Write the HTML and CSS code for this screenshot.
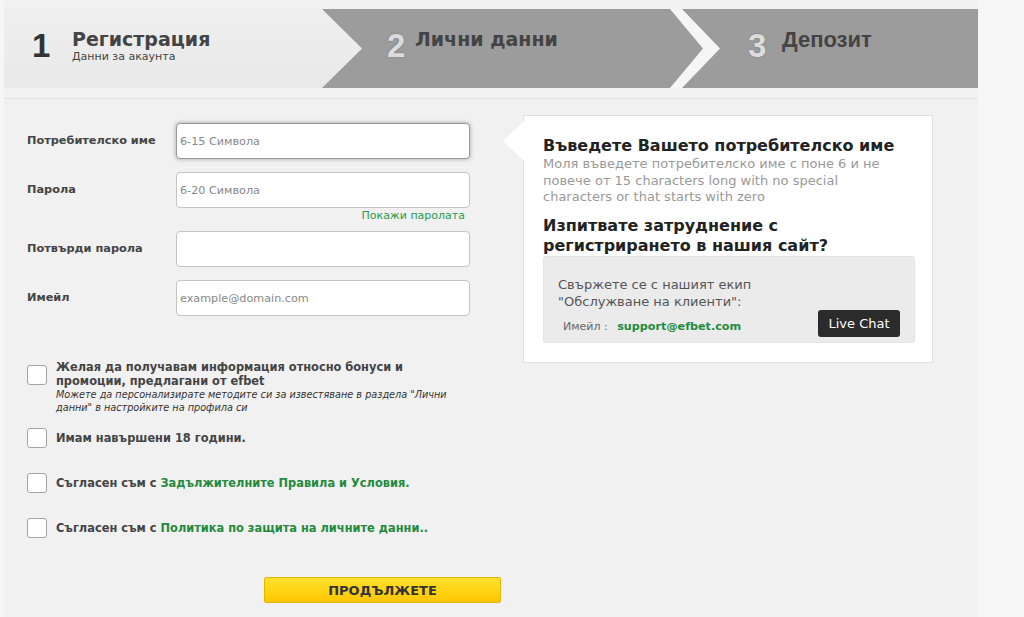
FILE: index.html
```html
<!DOCTYPE html>
<html lang="bg">
<head>
  <meta charset="UTF-8">
  <meta name="viewport" content="width=device-width, initial-scale=1.0">
  <title>Регистрация</title>
  <link rel="stylesheet" href="styles.css">
</head>
<body>
  <div class="page">
    <div class="steps">
      <div class="step step-active">
        <span class="step-num">1</span>
        <div class="step-text">
          <div class="step-title">Регистрация</div>
          <div class="step-sub">Данни за акаунта</div>
        </div>
      </div>
      <div class="step step-next">
        <span class="step-num">2</span>
        <div class="step-title">Лични данни</div>
      </div>
      <div class="step-sep"></div>
      <div class="step step-last">
        <span class="step-num">3</span>
        <div class="step-title">Депозит</div>
      </div>
    </div>
    <div class="divider"></div>

    <div class="content">
      <form class="reg-form" onsubmit="return false">
        <div class="field">
          <label for="username">Потребителско име</label>
          <input type="text" id="username" class="is-focused" placeholder="6-15 Символа">
        </div>
        <div class="field field-pass">
          <label for="password">Парола</label>
          <div class="field-col">
            <input type="password" id="password" placeholder="6-20 Символа">
            <a href="#" class="show-pass">Покажи паролата</a>
          </div>
        </div>
        <div class="field">
          <label for="confirm">Потвърди парола</label>
          <input type="password" id="confirm">
        </div>
        <div class="field">
          <label for="email">Имейл</label>
          <input type="email" id="email" placeholder="example@domain.com">
        </div>

        <div class="checks">
          <div class="check check-promo">
            <input type="checkbox" id="promo">
            <div class="check-text">
              <label for="promo">Желая да получавам информация относно бонуси и промоции, предлагани от efbet</label>
              <p class="check-note">Можете да персонализирате методите си за известяване в раздела "Лични данни" в настройките на профила си</p>
            </div>
          </div>
          <div class="check">
            <input type="checkbox" id="age">
            <label for="age">Имам навършени 18 години.</label>
          </div>
          <div class="check">
            <input type="checkbox" id="terms">
            <label for="terms">Съгласен съм с <a href="#">Задължителните Правила и Условия.</a></label>
          </div>
          <div class="check">
            <input type="checkbox" id="privacy">
            <label for="privacy">Съгласен съм с <a href="#">Политика по защита на личните данни..</a></label>
          </div>
        </div>

        <button type="submit" class="btn-next">ПРОДЪЛЖЕТЕ</button>
      </form>

      <aside class="hint">
        <h3>Въведете Вашето потребителско име</h3>
        <p class="hint-desc">Моля въведете потребителско име с поне 6 и не повече от 15 characters long with no special characters or that starts with zero</p>
        <h3>Изпитвате затруднение с регистрирането в нашия сайт?</h3>
        <div class="support">
          <p>Свържете се с нашият екип "Обслужване на клиенти":</p>
          <div class="support-row">
            <div class="support-mail"><span>Имейл :</span> <a href="#">support@efbet.com</a></div>
            <button type="button" class="btn-chat">Live Chat</button>
          </div>
        </div>
      </aside>
    </div>
  </div>
</body>
</html>
```

FILE: styles.css
```css
body {
  margin: 0;
  background-color: #f6f6f6;
  font-family: 'DejaVu Sans', Verdana, sans-serif;
  color: #444;
}
.page {
  width: 974px;
  height: 617px;
  margin-left: 4px;
  padding-top: 9px;
  box-sizing: border-box;
  background-color: #f1f1f1;
}

/* steps */
.steps {
  display: flex;
  height: 79px;
  background-color: #9c9c9c;
}
.step {
  display: flex;
  align-items: flex-start;
  box-sizing: border-box;
  padding-top: 19px;
}
.step-active {
  flex: 0 0 358px;
  padding-left: 28px;
  background: linear-gradient(#efefef, #e9e9e9);
  clip-path: polygon(0 0, 318px 0, 358px 50%, 318px 100%, 0 100%);
}
.step-next {
  flex: 0 0 308px;
  padding-left: 25px;
}
.step-sep {
  flex: 0 0 50px;
  background-color: #f5f5f5;
  clip-path: polygon(0 0, 12px 0, 50px 50%, 12px 100%, 0 100%, 33px 50%);
}
.step-last {
  flex: 1;
  padding-left: 28px;
}
.step-num {
  margin-top: 1px;
  width: 40px;
  font-family: 'Liberation Sans', Arial, sans-serif;
  font-weight: bold;
  font-size: 33px;
  line-height: 33px;
  color: #333;
}
.step-next .step-num,
.step-last .step-num {
  width: 28px;
  color: #dcdcdc;
  text-shadow: 0 0 2px rgba(0, 0, 0, 0.25);
}
.step-last .step-num {
  width: 34px;
}
.step-title {
  font-size: 19px;
  font-weight: bold;
  line-height: 22px;
  color: #444;
}
.step-last .step-title {
  margin-top: 1px;
  font-family: 'Liberation Sans', Arial, sans-serif;
  font-size: 22px;
}
.step-sub {
  font-size: 11px;
  line-height: 13px;
  color: #444;
}
.divider {
  height: 1px;
  margin-top: 10px;
  background-color: #e2e2e2;
}

/* form */
.content {
  display: flex;
  align-items: flex-start;
  padding: 16px 0 0 23px;
}
.reg-form {
  flex: 0 0 480px;
  margin-top: 8px;
}
.field {
  display: flex;
  align-items: flex-start;
  margin-bottom: 13px;
}
.field-pass {
  margin-bottom: 8px;
}
.field label {
  flex: 0 0 149px;
  font-size: 11.3px;
  font-weight: bold;
  line-height: 36px;
  color: #444;
}
.field-col {
  display: flex;
  flex-direction: column;
  align-items: flex-end;
}
.field input {
  width: 294px;
  height: 36px;
  box-sizing: border-box;
  padding: 0 3px;
  border: 1px solid #c4c4c4;
  border-radius: 4px;
  background-color: #fff;
  font-family: 'DejaVu Sans', Verdana, sans-serif;
  font-size: 11.2px;
  color: #333;
}
.field input::placeholder {
  color: #888;
}
.field input.is-focused {
  border-color: #9a9a9a;
  box-shadow: 0 0 4px rgba(0, 0, 0, 0.35);
}
.show-pass {
  margin-right: 5px;
  font-size: 11px;
  line-height: 15px;
  color: #2a9a4c;
  text-decoration: none;
}

.checks {
  margin-top: 49px;
}
.check {
  display: flex;
  align-items: center;
  margin-bottom: 25px;
}
.check-promo {
  align-items: flex-start;
  margin-bottom: 14px;
}
.check input {
  flex: 0 0 20px;
  width: 20px;
  height: 20px;
  margin: 0 9px 0 0;
  appearance: none;
  border: 1px solid #a4a4a4;
  border-radius: 3px;
  background-color: #fff;
}
.check label {
  font-size: 11.4px;
  font-weight: bold;
  line-height: 14px;
  color: #444;
}
.check label a {
  color: #248a3d;
  text-decoration: none;
}
.check-text {
  margin-top: -5px;
  width: 415px;
}
.check-text label {
  display: block;
}
.check-note {
  margin: 0;
  font-size: 9.7px;
  font-style: italic;
  line-height: 13px;
  color: #333;
}
.btn-next {
  display: block;
  width: 237px;
  height: 26px;
  margin: 39px 0 0 237px;
  border: 1px solid #e4b600;
  border-radius: 2px;
  background: linear-gradient(#ffe22e, #fcc600);
  font-family: 'DejaVu Sans', Verdana, sans-serif;
  font-size: 13px;
  font-weight: bold;
  color: #333;
  cursor: pointer;
}

/* hint panel */
.hint {
  position: relative;
  width: 410px;
  height: 248px;
  margin-left: 16px;
  box-sizing: border-box;
  padding: 20px 17px 0 19px;
  border: 1px solid #e0e0e0;
  background-color: #fff;
}
.hint::before {
  content: '';
  position: absolute;
  left: -21px;
  top: 5px;
  width: 21px;
  height: 40px;
  background-color: #fff;
  clip-path: polygon(100% 0, 0 50%, 100% 100%);
}
.hint h3 {
  margin: 0;
  font-size: 16px;
  line-height: 20px;
  color: #222;
}
.hint-desc {
  width: 340px;
  margin: 0 0 10px;
  font-size: 13px;
  line-height: 16.5px;
  color: #999;
}
.support {
  padding: 19px 14px 5px 14px;
  border: 1px solid #e3e3e3;
  border-radius: 3px;
  background-color: #ebebeb;
}
.support p {
  margin: 0;
  width: 240px;
  font-size: 13px;
  line-height: 17px;
  color: #555;
}
.support-row {
  display: flex;
  justify-content: space-between;
  align-items: flex-end;
}
.support-mail {
  padding: 0 0 4px 5px;
  font-size: 11px;
  color: #666;
}
.support-mail a {
  margin-left: 6px;
  font-size: 11.2px;
  font-weight: bold;
  color: #248a3d;
  text-decoration: none;
}
.btn-chat {
  width: 82px;
  height: 27px;
  border: none;
  border-radius: 3px;
  background-color: #2b2b2b;
  font-family: 'DejaVu Sans', Verdana, sans-serif;
  font-size: 13px;
  color: #fff;
}
```
